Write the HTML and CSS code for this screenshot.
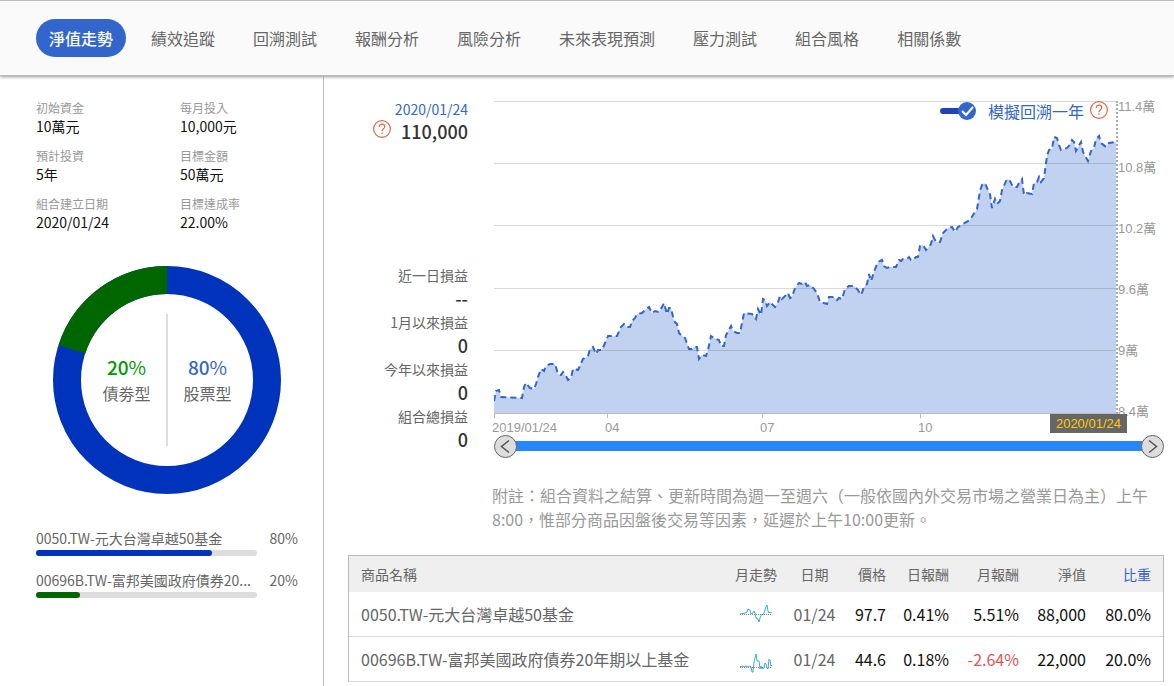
FILE: index.html
```html
<!DOCTYPE html>
<html lang="zh-Hant">
<head>
<meta charset="utf-8">
<meta name="viewport" content="width=device-width, initial-scale=1">
<title>淨值走勢</title>
<link rel="stylesheet" href="styles.css">
</head>
<body>
<nav class="tabs">
  <button class="tab tab-active" type="button">淨值走勢</button>
  <button class="tab" type="button">績效追蹤</button>
  <button class="tab" type="button">回溯測試</button>
  <button class="tab" type="button">報酬分析</button>
  <button class="tab" type="button">風險分析</button>
  <button class="tab" type="button">未來表現預測</button>
  <button class="tab" type="button">壓力測試</button>
  <button class="tab" type="button">組合風格</button>
  <button class="tab" type="button">相關係數</button>
</nav>
<div class="page">
  <aside class="sidebar">
    <dl class="facts">
      <div><dt>初始資金</dt><dd>10萬元</dd></div>
      <div><dt>每月投入</dt><dd>10,000元</dd></div>
      <div><dt>預計投資</dt><dd>5年</dd></div>
      <div><dt>目標金額</dt><dd>50萬元</dd></div>
      <div><dt>組合建立日期</dt><dd>2020/01/24</dd></div>
      <div><dt>目標達成率</dt><dd>22.00%</dd></div>
    </dl>
    <div class="donut">
      <svg class="donut-ring" viewBox="0 0 228 228" aria-hidden="true">
        <g transform="rotate(-90 114 114)" fill="none" stroke-width="28">
          <circle cx="114" cy="114" r="100" stroke="#0033bb"/>
          <circle cx="114" cy="114" r="100" stroke="#006600" pathLength="100" stroke-dasharray="20 80" stroke-dashoffset="-80"/>
        </g>
      </svg>
      <div class="donut-center">
        <div class="share share-bond"><p class="share-value"><b>20</b>%</p><p class="share-name">債劵型</p></div>
        <div class="share share-stock"><p class="share-value"><b>80</b>%</p><p class="share-name">股票型</p></div>
      </div>
    </div>
    <ul class="holdings">
      <li class="holding">
        <span class="holding-name">0050.TW-元大台灣卓越50基金</span><span>80%</span>
        <div class="bar"><div class="bar-fill bar-stock" style="width:80%"></div></div>
      </li>
      <li class="holding">
        <span class="holding-name">00696B.TW-富邦美國政府債券20...</span><span>20%</span>
        <div class="bar"><div class="bar-fill bar-bond" style="width:20%"></div></div>
      </li>
    </ul>
  </aside>
  <main class="main">
    <section class="overview">
      <div class="summary">
        <div>
          <p class="summary-date">2020/01/24</p>
          <p class="summary-total">
            <button class="help" type="button" aria-label="說明"><svg viewBox="0 0 18 18"><circle cx="9" cy="9" r="8.4"/><path d="M6.200 6.900C6.200 5.100 7.400 4.100 9 4.100s2.800 1 2.800 2.500c0 1.200-.8 1.800-1.600 2.400-.8.6-1.200 1.100-1.200 2.200"/><path d="M9 12.600v1.500"/></svg></button>
            <span>110,000</span>
          </p>
        </div>
        <dl class="gains">
          <dt>近一日損益</dt><dd>--</dd>
          <dt>1月以來損益</dt><dd>0</dd>
          <dt>今年以來損益</dt><dd>0</dd>
          <dt>組合總損益</dt><dd>0</dd>
        </dl>
      </div>
      <div class="chart-column">
        <div class="chart">
          <div class="plot">
            <svg class="plot-svg" viewBox="494 101 622 313" preserveAspectRatio="none" role="img" aria-label="淨值走勢圖">
              <path class="area" d="M494 401L496 391 499 390 501 397 522 398 524 387 526 383 530 388 534 389 536 384 538 377 541 369 544 371 546 366 550 364 555 364 558 374 561 375 563 372 566 376 568 380 571 378 573 369 578 370 583 359 588 356 590 349 593 347 596 354 598 350 602 350 605 343 608 336 617 336 621 327 624 324 627 327 630 327 632 321 635 318 637 314 642 313 645 310 649 307 652 313 655 311 659 312 662 307 664 303 667 314 669 308 671 308 674 321 677 324 679 333 682 336 685 338 689 349 692 349 694 347 697 347 699 359 702 355 706 356 708 350 711 336 716 339 719 340 721 346 724 346 726 335 731 326 733 331 737 333 740 333 743 318 744 313 752 314 756 319 758 309 761 315 763 299 765 300 767 306 770 302 775 307 778 302 780 296 782 299 788 293 790 298 792 297 795 288 799 283 802 284 805 282 807 286 810 285 814 289 817 293 820 302 827 304 829 297 834 297 837 300 839 298 842 299 845 289 849 286 854 286 858 290 861 295 864 287 867 284 869 274 871 281 875 269 878 262 882 260 884 266 887 268 890 267 896 267 899 260 901 261 903 259 907 259 909 257 911 260 913 260 916 257 918 257 920 246 923 245 926 250 928 248 931 244 933 236 936 242 940 242 943 233 948 228 952 227 955 232 958 227 960 226 963 224 970 220 973 215 977 209 980 191 982 185 985 183 987 188 990 194 992 208 995 199 997 204 1000 201 1002 190 1007 179 1010 181 1013 187 1017 187 1019 183 1022 179 1024 195 1027 193 1032 194 1034 183 1037 182 1039 177 1041 182 1044 178 1047 156 1049 150 1052 149 1054 137 1057 138 1059 145 1061 150 1067 148 1069 146 1072 140 1074 142 1076 151 1081 142 1083 152 1088 161 1091 151 1094 148 1096 139 1099 136 1101 143 1106 147 1109 143 1116 142V414H494Z"/>
              <path class="grid-line" d="M494 101.5H1116M494 163.5H1116M494 225.5H1116M494 288.5H1116M494 350.5H1116"/>
              <path class="axis-line" d="M494 413.5H1116"/>
              <path class="line" d="M494 401L496 391 499 390 501 397 522 398 524 387 526 383 530 388 534 389 536 384 538 377 541 369 544 371 546 366 550 364 555 364 558 374 561 375 563 372 566 376 568 380 571 378 573 369 578 370 583 359 588 356 590 349 593 347 596 354 598 350 602 350 605 343 608 336 617 336 621 327 624 324 627 327 630 327 632 321 635 318 637 314 642 313 645 310 649 307 652 313 655 311 659 312 662 307 664 303 667 314 669 308 671 308 674 321 677 324 679 333 682 336 685 338 689 349 692 349 694 347 697 347 699 359 702 355 706 356 708 350 711 336 716 339 719 340 721 346 724 346 726 335 731 326 733 331 737 333 740 333 743 318 744 313 752 314 756 319 758 309 761 315 763 299 765 300 767 306 770 302 775 307 778 302 780 296 782 299 788 293 790 298 792 297 795 288 799 283 802 284 805 282 807 286 810 285 814 289 817 293 820 302 827 304 829 297 834 297 837 300 839 298 842 299 845 289 849 286 854 286 858 290 861 295 864 287 867 284 869 274 871 281 875 269 878 262 882 260 884 266 887 268 890 267 896 267 899 260 901 261 903 259 907 259 909 257 911 260 913 260 916 257 918 257 920 246 923 245 926 250 928 248 931 244 933 236 936 242 940 242 943 233 948 228 952 227 955 232 958 227 960 226 963 224 970 220 973 215 977 209 980 191 982 185 985 183 987 188 990 194 992 208 995 199 997 204 1000 201 1002 190 1007 179 1010 181 1013 187 1017 187 1019 183 1022 179 1024 195 1027 193 1032 194 1034 183 1037 182 1039 177 1041 182 1044 178 1047 156 1049 150 1052 149 1054 137 1057 138 1059 145 1061 150 1067 148 1069 146 1072 140 1074 142 1076 151 1081 142 1083 152 1088 161 1091 151 1094 148 1096 139 1099 136 1101 143 1106 147 1109 143 1116 142"/>
            </svg>
            <div class="backtest">
              <label class="toggle"><input class="toggle-input" type="checkbox" checked><span>模擬回溯一年</span></label>
              <button class="help" type="button" aria-label="說明"><svg viewBox="0 0 18 18"><circle cx="9" cy="9" r="8.4"/><path d="M6.200 6.900C6.200 5.100 7.400 4.100 9 4.100s2.800 1 2.800 2.500c0 1.200-.8 1.800-1.600 2.400-.8.6-1.200 1.100-1.200 2.200"/><path d="M9 12.600v1.500"/></svg></button>
            </div>
          </div>
          <div class="y-axis"><span>11.4萬</span><span>10.8萬</span><span>10.2萬</span><span>9.6萬</span><span>9萬</span><span>8.4萬</span></div>
          <div class="x-axis">
            <span class="tick">2019/01/24</span><span class="tick">04</span><span class="tick">07</span><span class="tick">10</span>
            <span class="date-tag">2020/01/24</span>
          </div>
        </div>
        <div class="range">
          <div class="range-track"></div>
          <input class="range-input range-start" type="range" min="0" max="100" value="0" aria-label="起始日期">
          <input class="range-input range-end" type="range" min="0" max="100" value="100" aria-label="結束日期">
        </div>
        <p class="note">附註：組合資料之結算、更新時間為週一至週六（一般依國內外交易市場之營業日為主）上午8:00，惟部分商品因盤後交易等因素，延遲於上午10:00更新。</p>
      </div>
    </section>
    <table class="products">
      <colgroup><col><col class="col-trend"><col class="col-date"><col class="col-price"><col class="col-day"><col class="col-month"><col class="col-value"><col class="col-weight"></colgroup>
      <thead>
        <tr><th class="name">商品名稱</th><th>月走勢</th><th class="date">日期</th><th>價格</th><th>日報酬</th><th>月報酬</th><th>淨值</th><th class="weight sorted">比重</th></tr>
      </thead>
      <tbody>
        <tr>
          <td class="name">0050.TW-元大台灣卓越50基金</td>
          <td class="trend"><svg class="spark" viewBox="0 1 34 24" aria-hidden="true"><path class="spark-base" d="M1 13.5H33"/><path class="spark-line" d="M1 13L4 12.500 6 12 8 11 9 8 11 9 12 13 14 12 15 10 16 12 17 17 19 18 20 21 21 17 22 15 23 13 24 14 25 12 27 6 28 4 29 10 30 12 31 11 33 12"/></svg></td>
          <td class="date">01/24</td><td>97.7</td><td>0.41%</td><td>5.51%</td><td>88,000</td><td class="weight">80.0%</td>
        </tr>
        <tr>
          <td class="name">00696B.TW-富邦美國政府債券20年期以上基金</td>
          <td class="trend"><svg class="spark" viewBox="0 -5 34 24" aria-hidden="true"><path class="spark-base" d="M1 15.500H33"/><path class="spark-line" d="M1 14L2 15 4 14 5 15 7 14 9 15 11 14 12 15 13 20 14 20 15 10 17 2 18 9 20 9 21 17 22 14 23 17 25 16 26 11 27 12 28 16 29 17 30 7 31 8 32 14 33 13"/></svg></td>
          <td class="date">01/24</td><td>44.6</td><td>0.18%</td><td class="loss">-2.64%</td><td>22,000</td><td class="weight">20.0%</td>
        </tr>
      </tbody>
    </table>
  </main>
</div>
</body>
</html>
```
FILE: styles.css
```css
* {
  box-sizing: border-box;
}

body {
  margin: 0;
  min-height: 100vh;
  display: flex;
  flex-direction: column;
  background: #fff;
  color: #666;
  font-family: "Noto Sans CJK TC", sans-serif;
  font-size: 14px;
}

p, dl, dd, ul {
  margin: 0;
  padding: 0;
}

button {
  border: 0;
  padding: 0;
  background: none;
  color: inherit;
  font: inherit;
  cursor: pointer;
}

.tabs {
  display: flex;
  gap: 12px;
  padding: 18px 36px;
  border-top: 1px solid #bbb;
  border-bottom: 1px solid #bbb;
  background: #fafafa;
  box-shadow: 0 1px 3px #999;
  z-index: 1;
}

.tab {
  height: 38px;
  padding: 0 13px;
  border-radius: 19px;
  font-size: 16px;
  white-space: nowrap;
}

.tab-active {
  background: #3366cc;
  color: #fff;
  font-weight: 500;
}

.page {
  flex: 1;
  display: grid;
  grid-template-columns: 324px minmax(0, 1fr);
}

.sidebar {
  padding: 23px 25px 0 36px;
  border-right: 1px solid #bbb;
}

.facts {
  display: grid;
  grid-template-columns: 144px 1fr;
  gap: 12px 0;
  line-height: 18px;
}

.facts dt {
  color: #999;
  font-size: 12px;
}

.facts dd {
  color: #111;
}

.donut {
  display: grid;
  width: 228px;
  margin: 35px auto 34px;
}

.donut-ring, .donut-center {
  grid-area: 1 / 1;
}

.donut-ring {
  display: block;
  width: 100%;
}

.donut-center {
  place-self: center;
  display: grid;
  grid-template-columns: 80px 80px;
  height: 132px;
}

.share {
  display: flex;
  flex-direction: column;
  justify-content: center;
  text-align: center;
  line-height: 26px;
}

.share-bond {
  border-right: 1px solid #ddd;
}

.share-stock {
  border-left: 1px solid #ddd;
}

.share-value {
  font-size: 19px;
}

.share-value b {
  font-weight: 500;
}

.share-bond .share-value {
  color: #009900;
}

.share-stock .share-value {
  color: #3366cc;
}

.share-name {
  font-size: 16px;
}

.holdings {
  display: grid;
  gap: 14px;
  list-style: none;
  line-height: 20px;
}

.holding {
  display: grid;
  grid-template-columns: minmax(0, 1fr) auto;
  gap: 2px 13px;
}

.holding-name {
  overflow: hidden;
  text-overflow: ellipsis;
  white-space: nowrap;
}

.bar {
  height: 6px;
  border-radius: 3px;
  background: #ddd;
}

.bar-fill {
  height: 100%;
  border-radius: 3px;
}

.bar-stock {
  background: #0033bb;
}

.bar-bond {
  background: #006600;
}

.main {
  padding: 22px 10px 4px 24px;
}

.overview {
  display: grid;
  grid-template-columns: 120px minmax(0, 1fr);
  gap: 24px;
  margin-bottom: 24px;
}

.summary {
  text-align: right;
}

.summary-date {
  color: #3366cc;
  line-height: 22px;
}

.summary-total {
  display: flex;
  justify-content: flex-end;
  align-items: flex-start;
  gap: 10px;
  color: #333;
  font-size: 18px;
  font-weight: 500;
  line-height: 22px;
}

.help {
  width: 18px;
  height: 18px;
}

.help svg {
  display: block;
  width: 18px;
  height: 18px;
  fill: none;
  stroke: #dd6650;
  stroke-width: 1.2;
}

.gains {
  margin-top: 122px;
}

.gains dt {
  line-height: 22px;
}

.gains dd {
  color: #333;
  font-size: 18px;
  font-weight: 500;
  line-height: 25px;
}

.chart-column {
  padding-top: 3px;
}

.chart {
  display: grid;
  grid-template-columns: minmax(0, 1fr) 46px;
  grid-template-rows: 313px 20px;
  padding-left: 2px;
  color: #999;
  font-family: "Liberation Sans", "Noto Sans CJK TC", sans-serif;
  font-size: 13px;
}

.plot {
  position: relative;
  border-right: 2px dotted #aaa;
}

.plot-svg {
  display: block;
  width: 100%;
  height: 100%;
}

.area {
  fill: #3366cc;
  fill-opacity: 0.3;
}

.grid-line, .axis-line, .line {
  fill: none;
  vector-effect: non-scaling-stroke;
}

.grid-line {
  stroke: #333;
  stroke-opacity: 0.18;
}

.axis-line {
  stroke: #bbb;
}

.line {
  stroke: #3366cc;
  stroke-width: 2;
  stroke-dasharray: 6 4;
}

.backtest {
  position: absolute;
  top: 0;
  right: 8px;
  display: flex;
  gap: 6px;
}

.toggle {
  display: flex;
  align-items: center;
  gap: 12px;
  color: #3366cc;
  font-family: "Noto Sans CJK TC", sans-serif;
  font-size: 16px;
  line-height: 20px;
}

.toggle-input {
  appearance: none;
  width: 36px;
  height: 18px;
  margin: 0;
  background: url("data:image/svg+xml,%3Csvg xmlns='http://www.w3.org/2000/svg' viewBox='0 0 36 18'%3E%3Crect y='6' width='30' height='6' rx='3' fill='%232244b0'/%3E%3Ccircle cx='27' cy='9' r='9' fill='%233366cc'/%3E%3Cpath d='M22 9l4 4 7-8' fill='none' stroke='%23fff' stroke-width='2'/%3E%3C/svg%3E") no-repeat;
}

.y-axis {
  display: flex;
  flex-direction: column;
  justify-content: space-between;
  height: 325px;
  margin-top: -4px;
  line-height: 20px;
}

.x-axis {
  grid-column: 1;
  position: relative;
  display: grid;
  grid-template-columns: 113fr 155fr 158fr 198fr;
}

.tick {
  border-left: 1px solid #bbb;
  height: 4px;
  padding-top: 4px;
  text-indent: -3px;
  line-height: 20px;
}

.date-tag {
  position: absolute;
  top: 0;
  right: -9px;
  padding: 0 6px;
  background: #666;
  color: #ffcc00;
  line-height: 19px;
}

.range {
  display: grid;
  align-items: center;
  height: 24px;
  padding-left: 2px;
}

.range-track, .range-input {
  grid-area: 1 / 1;
}

.range-track {
  height: 10px;
  margin: 0 11px;
  background: #2686fa;
}

.range-input {
  appearance: none;
  width: 100%;
  margin: 0;
  background: transparent;
  pointer-events: none;
}

.range-input::-webkit-slider-thumb {
  appearance: none;
  width: 23px;
  height: 23px;
  border: 1px solid #666;
  border-radius: 50%;
  background: #ddd center / 21px 21px no-repeat;
  pointer-events: auto;
}

.range-start::-webkit-slider-thumb {
  background-image: url("data:image/svg+xml,%3Csvg xmlns='http://www.w3.org/2000/svg' viewBox='0 0 21 21'%3E%3Cpath d='M14 4.500L6.500 10.500L14 16.500' fill='none' stroke='%23555' stroke-width='1.500'/%3E%3C/svg%3E");
}

.range-end::-webkit-slider-thumb {
  background-image: url("data:image/svg+xml,%3Csvg xmlns='http://www.w3.org/2000/svg' viewBox='0 0 21 21'%3E%3Cpath d='M7 4.500L14.500 10.500L7 16.500' fill='none' stroke='%23555' stroke-width='1.500'/%3E%3C/svg%3E");
}

.note {
  margin-top: 25px;
  color: #999;
  font-size: 16px;
  line-height: 24px;
}

.products {
  width: 100%;
  border: 1px solid #bbb;
  border-bottom: 0;
  border-spacing: 0;
  border-collapse: separate;
  table-layout: fixed;
}

.col-trend {
  width: 42px;
}

.col-date {
  width: 59px;
}

.col-price {
  width: 50px;
}

.col-day {
  width: 63px;
}

.col-month {
  width: 70px;
}

.col-value {
  width: 67px;
}

.col-weight {
  width: 77px;
}

.products th {
  height: 36px;
  padding: 0;
  background: #efefef;
  font-weight: 400;
  text-align: right;
}

.products td {
  height: 45px;
  padding: 0;
  border-bottom: 1px solid #ddd;
  color: #111;
  font-size: 16px;
  text-align: right;
}

.products .name {
  padding-left: 12px;
  color: #666;
  text-align: left;
}

.products .trend {
  text-align: center;
}

.products .date {
  padding-left: 16px;
  color: #666;
}

.products .weight {
  padding-right: 12px;
}

.products .sorted {
  color: #3a5fcc;
}

.products .loss {
  color: #dd5555;
}

.products td.date,
.products th.date {
  text-align: center;
}

.spark {
  display: block;
  width: 34px;
  height: 24px;
  margin: 0 auto;
  overflow: visible;
  fill: none;
}

.spark-base {
  stroke: #dd6666;
  stroke-dasharray: 1 1;
}

.spark-line {
  stroke: #33b5bb;
}
```
